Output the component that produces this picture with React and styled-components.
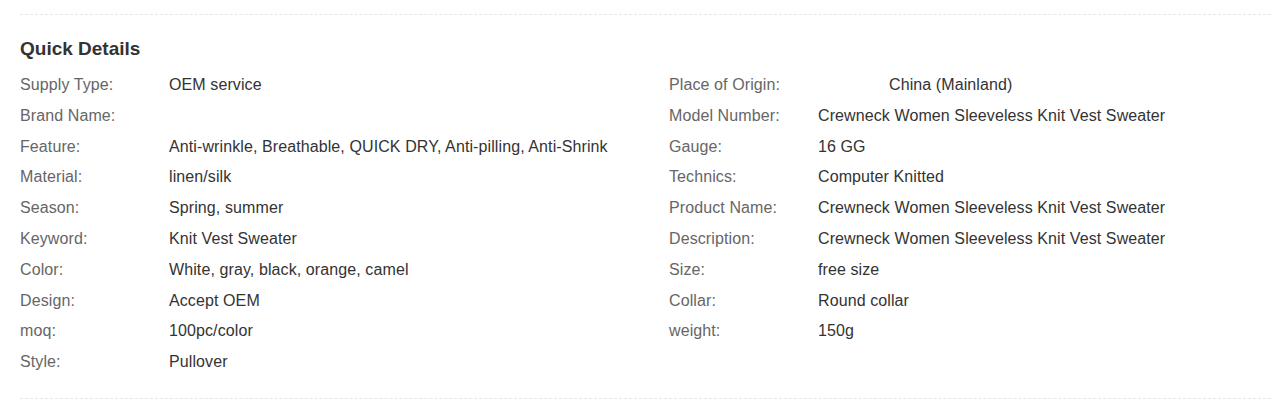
import React from "react";
import styled, { createGlobalStyle } from "styled-components";

const Global = createGlobalStyle`
  html, body { margin: 0; padding: 0; background: #fff; }
  body { font-family: "Liberation Sans", Arial, sans-serif; }
`;

const Section = styled.section`
  margin: 14px 7px 0 20px;
  border-top: 1px dashed #e6e6e6;
  border-bottom: 1px dashed #e6e6e6;
  padding: 22px 0 20px;
`;

const Title = styled.h3`
  margin: 0 0 9px;
  font-size: 19px;
  font-weight: bold;
  line-height: 24px;
  color: #333;
`;

const Columns = styled.div`
  display: grid;
  grid-template-columns: 649px 1fr;
`;

const List = styled.dl`
  margin: 0;
`;

const Row = styled.div`
  display: flex;
  font-size: 16px;
  letter-spacing: 0.1px;
  line-height: 30.8px;
  height: 30.8px;
`;

const Label = styled.dt`
  width: 149px;
  flex: none;
  color: #666;
`;

const Value = styled.dd`
  margin: 0;
  padding-left: ${(p) => p.$indent || 0}px;
  color: #333;
  white-space: nowrap;
`;

const left = [
  ["Supply Type:", "OEM service"],
  ["Brand Name:", ""],
  ["Feature:", "Anti-wrinkle, Breathable, QUICK DRY, Anti-pilling, Anti-Shrink"],
  ["Material:", "linen/silk"],
  ["Season:", "Spring, summer"],
  ["Keyword:", "Knit Vest Sweater"],
  ["Color:", "White, gray, black, orange, camel"],
  ["Design:", "Accept OEM"],
  ["moq:", "100pc/color"],
  ["Style:", "Pullover"],
];

const right = [
  ["Place of Origin:", "China (Mainland)", 71],
  ["Model Number:", "Crewneck Women Sleeveless Knit Vest Sweater"],
  ["Gauge:", "16 GG"],
  ["Technics:", "Computer Knitted"],
  ["Product Name:", "Crewneck Women Sleeveless Knit Vest Sweater"],
  ["Description:", "Crewneck Women Sleeveless Knit Vest Sweater"],
  ["Size:", "free size"],
  ["Collar:", "Round collar"],
  ["weight:", "150g"],
];

function Details({ items }) {
  return (
    <List>
      {items.map(([k, v, indent]) => (
        <Row key={k}>
          <Label>{k}</Label>
          <Value $indent={indent}>{v}</Value>
        </Row>
      ))}
    </List>
  );
}

export default function App() {
  return (
    <>
      <Global />
      <Section>
        <Title>Quick Details</Title>
        <Columns>
          <Details items={left} />
          <Details items={right} />
        </Columns>
      </Section>
    </>
  );
}
